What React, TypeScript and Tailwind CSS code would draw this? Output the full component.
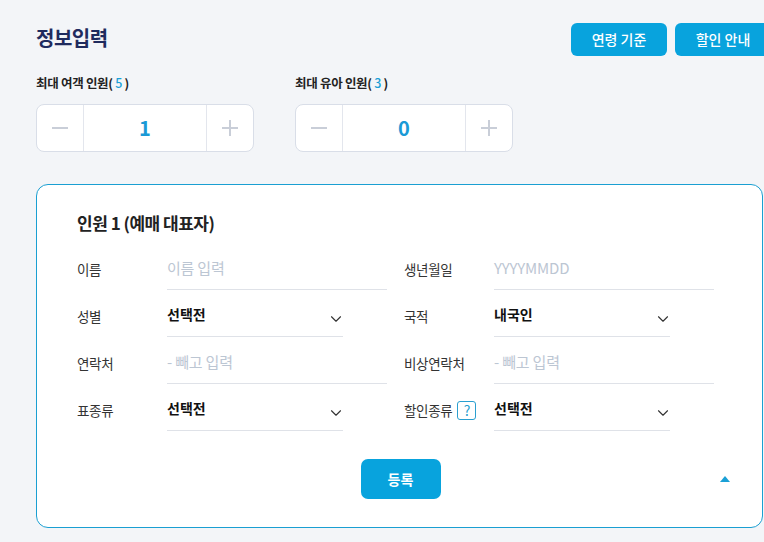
import { ChevronDown } from "lucide-react"

const FONT = "font-['Noto_Sans_CJK_KR','Noto_Sans',sans-serif]"

export default function App() {
  return (
    <div className={`${FONT} w-[764px] h-[542px] overflow-hidden bg-[#f3f5f8]`}>
      <div className="pl-[36px]">
        {/* 헤더 */}
        <div className="flex items-center w-[735px] pt-[23px] h-[56px]">
          <h1 className="text-[20px] font-bold text-[#1f2b5e] tracking-[-0.5px] -mt-[4px]">정보입력</h1>
          <div className="ml-auto flex gap-[8px]">
            <button className="w-[96px] h-[33px] rounded-[6px] bg-[#08a3dd] text-white text-[14px] font-medium">
              연령 기준
            </button>
            <button className="w-[96px] h-[33px] rounded-[6px] bg-[#08a3dd] text-white text-[14px] font-medium">
              할인 안내
            </button>
          </div>
        </div>

        {/* 인원 선택 */}
        <div className="flex gap-[41px] mt-[17px]">
          <Counter label="최대 여객 인원" max={5} value={1} />
          <Counter label="최대 유아 인원" max={3} value={0} />
        </div>

        {/* 인원 카드 */}
        <div className="mt-[32px] w-[727px] h-[344px] bg-white border border-[#1a9fd2] rounded-[12px] pl-[40px] pt-[24px]">
          <h2 className="text-[17px] font-bold text-[#222] tracking-[-0.5px] leading-[28px]">인원 1 (예매 대표자)</h2>

          <div className="mt-[12px] flex flex-col gap-[6px]">
            <div className="flex">
              <Field label="이름"><Input placeholder="이름 입력" /></Field>
              <Field label="생년월일"><Input placeholder="YYYYMMDD" /></Field>
            </div>
            <div className="flex">
              <Field label="성별"><Select value="선택전" /></Field>
              <Field label="국적"><Select value="내국인" /></Field>
            </div>
            <div className="flex">
              <Field label="연락처"><Input placeholder="- 빼고 입력" /></Field>
              <Field label="비상연락처"><Input placeholder="- 빼고 입력" /></Field>
            </div>
            <div className="flex">
              <Field label="표종류"><Select value="선택전" /></Field>
              <Field
                label={
                  <span className="flex items-center gap-[5px]">
                    할인종류
                    <span className="w-[19px] h-[19px] border border-[#2a9fd0] rounded-[3px] text-[#2a9fd0] text-[14px] leading-[17px] text-center">
                      ?
                    </span>
                  </span>
                }
              >
                <Select value="선택전" />
              </Field>
            </div>
          </div>

          <div className="relative mt-[28px] flex justify-center pr-[38px]">
            <button className="w-[80px] h-[40px] rounded-[7px] bg-[#08a3dd] text-white text-[14px] font-bold">
              등록
            </button>
            <span className="absolute right-[32px] top-[17px] w-0 h-0 border-l-[5px] border-r-[5px] border-b-[6px] border-l-transparent border-r-transparent border-b-[#1aa0d6]" />
          </div>
        </div>
      </div>
    </div>
  )
}

function Counter({ label, max, value }: { label: string; max: number; value: number }) {
  return (
    <div>
      <div className="text-[12.5px] font-bold text-[#222] leading-[20px] tracking-[-0.3px]">
        {label}( <span className="text-[#1a9fd6] font-medium">{max}</span> )
      </div>
      <div className="mt-[11px] flex w-[218px] h-[48px] bg-white border border-[#d9dee8] rounded-[8px]">
        <div className="w-[47px] flex items-center justify-center border-r border-[#e3e6ed]">
          <span className="w-[16px] h-[1.5px] bg-[#c9ced8]" />
        </div>
        <div className="flex-1 flex items-center justify-center text-[20px] font-bold text-[#1a9ad6]">
          {value}
        </div>
        <div className="w-[47px] flex items-center justify-center border-l border-[#e3e6ed]">
          <span className="relative w-[16px] h-[16px]">
            <span className="absolute left-0 top-[7px] w-[16px] h-[1.5px] bg-[#c9ced8]" />
            <span className="absolute top-0 left-[7px] w-[1.5px] h-[16px] bg-[#c9ced8]" />
          </span>
        </div>
      </div>
    </div>
  )
}

function Field({ label, children }: { label: React.ReactNode; children: React.ReactNode }) {
  return (
    <div className="flex items-center w-[327px]">
      <div className="w-[90px] text-[13.5px] text-[#333] tracking-[-0.3px]">{label}</div>
      {children}
    </div>
  )
}

function Input({ placeholder }: { placeholder: string }) {
  return (
    <div className="w-[220px] h-[41px] border-b border-[#dfe2e8] flex items-center pb-[2px] text-[15px] text-[#bcc6d3] tracking-[-0.2px]">
      {placeholder}
    </div>
  )
}

function Select({ value }: { value: string }) {
  return (
    <div className="w-[176px] h-[41px] border-b border-[#dfe2e8] flex items-center justify-between">
      <span className="text-[14px] font-bold text-[#111] -mt-[4px]">{value}</span>
      <ChevronDown size={18} strokeWidth={1.5} className="text-[#333] mt-[6px] -mr-[2px]" />
    </div>
  )
}
